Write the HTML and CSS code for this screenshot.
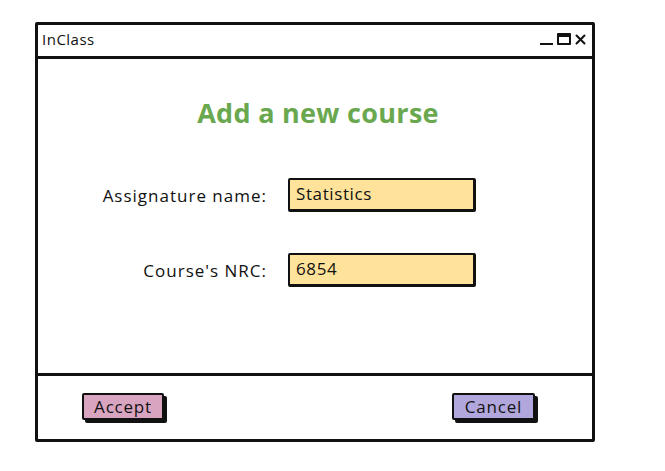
FILE: index.html
```html
<!DOCTYPE html>
<html>
<head>
<meta charset="utf-8">
<link rel="stylesheet" href="styles.css">
</head>
<body>
<div class="window">
  <div class="titlebar">
    <span class="app-name">InClass</span>
    <div class="controls">
      <span class="ctl-min"></span>
      <span class="ctl-max"></span>
      <svg class="ctl-close" width="11" height="11" viewBox="0 0 11 11"><path d="M1.5 1.5 L9.5 9.5 M9.5 1.5 L1.5 9.5" stroke="#111" stroke-width="2" stroke-linecap="round"/></svg>
    </div>
  </div>
  <div class="content">
    <h1 class="heading">Add a new course</h1>
    <div class="form">
      <label class="label">Assignature name:</label>
      <div class="field">Statistics</div>
      <label class="label">Course's NRC:</label>
      <div class="field">6854</div>
    </div>
  </div>
  <div class="footer">
    <button class="btn btn-accept">Accept</button>
    <button class="btn btn-cancel">Cancel</button>
  </div>
</div>
</body>
</html>
```
FILE: styles.css
```css
* { box-sizing: border-box; }
html, body { margin: 0; padding: 0; background: #fff; }
body {
  font-family: "Open Sans", "Noto Sans", "DejaVu Sans", sans-serif;
  color: #111;
  padding: 22px 0 0 35px;
}
.window {
  width: 560px;
  height: 420px;
  border: 3px solid #111;
  border-radius: 2px;
  display: flex;
  flex-direction: column;
  background: #fff;
}
.titlebar {
  height: 34px;
  border-bottom: 3px solid #111;
  display: flex;
  align-items: center;
  justify-content: space-between;
  padding: 0 6px 3px 4px;
}
.app-name { font-size: 15px; letter-spacing: 0.5px; }
.controls { display: flex; align-items: center; gap: 4px; }
.ctl-min {
  width: 13px; height: 2px; background: #111; margin-top: 10px;
}
.ctl-max {
  width: 14px; height: 12px; border: 2px solid #111; border-top-width: 4px; border-radius: 1px;
}
.ctl-close { display: block; }
.content {
  flex: 1;
  padding-top: 37px;
}
.heading {
  margin: 0;
  text-align: center;
  font-size: 27px;
  line-height: 34px;
  font-weight: 700;
  color: #6aa84f;
  letter-spacing: 0.3px;
  padding-left: 6px;
}
.form {
  margin-top: 48px;
  display: grid;
  grid-template-columns: 229px 188px;
  column-gap: 21px;
  row-gap: 41px;
  align-items: center;
}
.label {
  text-align: right;
  font-size: 17px;
  letter-spacing: 1px;
}
.field {
  height: 34px;
  background: #ffe39b;
  border: 2px solid #111;
  border-right-width: 3px;
  border-bottom-width: 3px;
  border-radius: 2px;
  padding: 0 6px;
  font-size: 17px;
  line-height: 28px;
  letter-spacing: 0.6px;
}
.footer {
  height: 66px;
  border-top: 3px solid #111;
  display: flex;
  justify-content: space-between;
  align-items: flex-start;
  padding: 17px 57px 0 44px;
}
.btn {
  font-family: inherit;
  font-size: 17px;
  letter-spacing: 0.8px;
  color: #111;
  height: 27px;
  width: 82px;
  border: 2px solid #111;
  border-radius: 2px;
  box-shadow: 3px 3px 0 #111;
  padding: 0;
  line-height: 22px;
}
.btn-accept { background: #d9a4c0; }
.btn-cancel { background: #b1a7dc; width: 83px; }
```
